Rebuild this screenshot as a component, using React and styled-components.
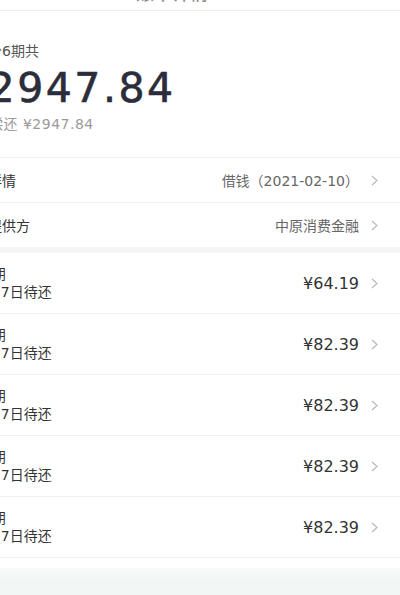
import React from "react"
import styled, { createGlobalStyle } from "styled-components"

const GlobalStyle = createGlobalStyle`
  html, body {
    margin: 0;
    padding: 0;
    background: #fff;
    overflow: hidden;
  }
  body {
    font-family: "DejaVu Sans", "Noto Sans CJK SC", sans-serif;
  }
`

// page is wider than the window and shifted left, so its left part is cut off
const Page = styled.div`
  width: 456px;
  margin-left: -56px;
  min-height: 595px;
  display: flex;
  flex-direction: column;
  background: #fff;
`

const Header = styled.header`
  height: 10px;
  border-bottom: 1px solid #efefef;
  display: flex;
  justify-content: center;
`

const Title = styled.h1`
  margin: -16px 0 0 0;
  font-size: 18px;
  line-height: 20px;
  font-weight: 500;
  color: #888;
`

const Summary = styled.section`
  padding: 30px 16px 23px;
  display: flex;
  flex-direction: column;
`

const SummaryLabel = styled.div`
  font-size: 14px;
  line-height: 20px;
  color: #555;
`

const Total = styled.div`
  margin-top: 3px;
  font-family: "DejaVu Sans", sans-serif;
  font-size: 41px;
  line-height: 48px;
  letter-spacing: 2.5px;
  color: #2b2d3a;
  -webkit-text-stroke: 0.6px #2b2d3a;
`

const Remain = styled.div`
  margin-top: 2px;
  font-size: 14px;
  line-height: 20px;
  letter-spacing: 0.5px;
  color: #9a9a9a;
`

const InfoList = styled.ul`
  list-style: none;
  margin: 0;
  padding: 0;
  border-top: 1px solid #f0f0f0;
`

const InfoRow = styled.li`
  height: 44px;
  padding: 0 22px 0 16px;
  display: flex;
  align-items: center;
  justify-content: space-between;
  & + & {
    border-top: 1px solid #f0f0f0;
  }
`

const RowLabel = styled.span`
  font-size: 14px;
  color: #333;
`

const RowSide = styled.span`
  display: flex;
  align-items: center;
  gap: 12px;
`

const RowValue = styled.span`
  font-size: 14px;
  color: #666;
`

const Band = styled.div`
  height: 6px;
  background: #f5f5f6;
`

const PlanList = styled.ul`
  list-style: none;
  margin: 0;
  padding: 0 0 10px;
`

const PlanRow = styled.li`
  height: 60px;
  padding: 0 22px 0 16px;
  display: flex;
  align-items: center;
  justify-content: space-between;
  border-bottom: 1px solid #f0f0f0;
`

const PlanText = styled.div`
  display: flex;
  flex-direction: column;
  gap: 1px;
  font-size: 14px;
  line-height: 17px;
  color: #333;
`

const Amount = styled.span`
  font-size: 16px;
  color: #333;
`

const Footer = styled.footer`
  flex: 1;
  background: linear-gradient(#f7fbf9, #f2f7f5 12px);
`

const Chevron = () => (
  <svg width="7" height="11" viewBox="0 0 7 11" fill="none">
    <polyline points="1,1 6,5.5 1,10" stroke="#b8b8b8" strokeWidth="1.2" />
  </svg>
)

const info = [
  { label: "借款详情", value: "借钱（2021-02-10）" },
  { label: "资金提供方", value: "中原消费金融" },
]

const plans = [
  { period: "第01期", date: "03月27日待还", amount: "¥64.19" },
  { period: "第02期", date: "04月27日待还", amount: "¥82.39" },
  { period: "第03期", date: "05月27日待还", amount: "¥82.39" },
  { period: "第04期", date: "06月27日待还", amount: "¥82.39" },
  { period: "第05期", date: "07月27日待还", amount: "¥82.39" },
]

export default function App() {
  return (
    <Page>
      <GlobalStyle />
      <Header>
        <Title>账单详情</Title>
      </Header>
      <Summary>
        <SummaryLabel>借款分6期共</SummaryLabel>
        <Total>¥2947.84</Total>
        <Remain>剩余偿还 ¥2947.84</Remain>
      </Summary>
      <InfoList>
        {info.map(item => (
          <InfoRow key={item.label}>
            <RowLabel>{item.label}</RowLabel>
            <RowSide>
              <RowValue>{item.value}</RowValue>
              <Chevron />
            </RowSide>
          </InfoRow>
        ))}
      </InfoList>
      <Band />
      <PlanList>
        {plans.map(item => (
          <PlanRow key={item.period}>
            <PlanText>
              <span>{item.period}</span>
              <span>{item.date}</span>
            </PlanText>
            <RowSide>
              <Amount>{item.amount}</Amount>
              <Chevron />
            </RowSide>
          </PlanRow>
        ))}
      </PlanList>
      <Footer />
    </Page>
  )
}
